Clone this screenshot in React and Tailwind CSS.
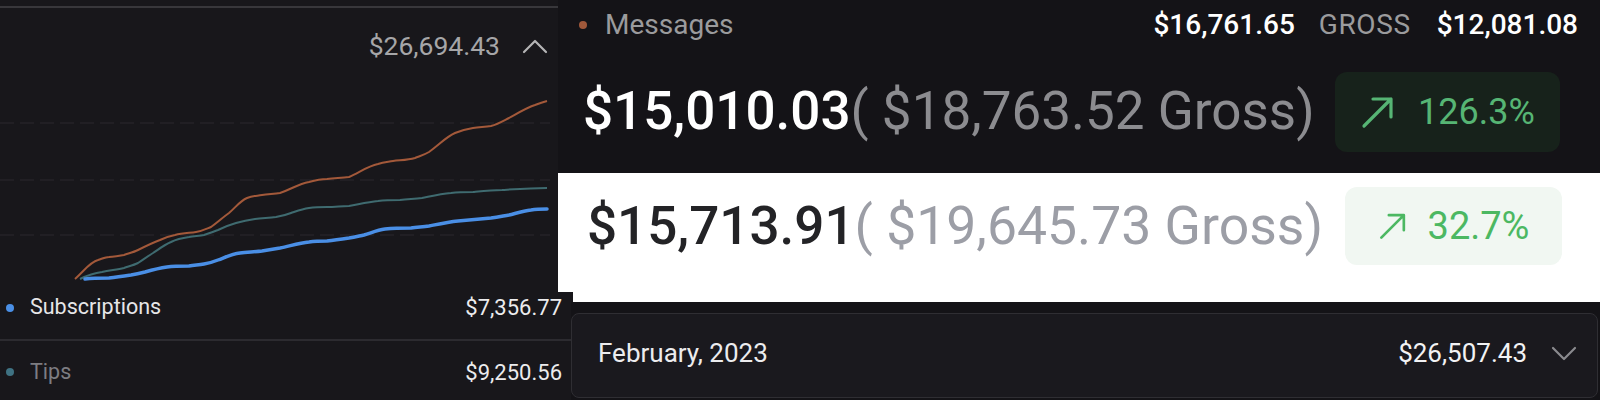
const orange = "M75 279 C85 270 90 262 98 260 C104 258 106 257 109 257 C116 256 120 256 124 255 C130 253 134 252 138 250 C146 246 152 243 160 240 C166 237 170 236 175 235 C183 233 190 233 196 232 C202 231 206 229 211 227 C218 222 222 218 229 213 C236 207 240 201 247 198 C252 196 256 196 262 195 C268 194 274 194 280 193 C292 189 298 184 309 182 C316 180 320 179 327 179 C336 178 342 178 349 177 C360 172 368 166 378 164 C384 162 388 162 393 161 C402 160 408 160 415 158 C420 156 424 155 429 152 C440 144 446 137 455 133 C462 130 466 129 473 128 C480 127 485 127 491 126 C498 124 503 121 509 118 C518 113 526 108 535 105 C540 103 543 102 547 101";
const teal = "M80 279 C88 275 94 273 102 272 C110 270 117 270 124 268 C130 266 134 265 138 263 C144 259 148 256 153 253 C159 249 164 245 171 242 C177 239 182 238 189 237 C195 236 200 236 204 235 C210 233 213 232 218 230 C224 227 229 225 236 223 C243 221 248 220 255 219 C262 218 269 218 276 217 C282 216 286 215 291 213 C297 211 302 209 309 208 C316 207 320 207 327 207 C335 207 342 206 349 206 C360 204 368 202 378 201 C386 200 392 200 400 200 C408 199 414 199 422 198 C432 196 440 194 451 193 C459 192 465 192 473 192 C483 191 492 190 502 190 C518 189 532 188 547 188";
const blue = "M85 279 C93 278 100 278 109 278 C117 277 124 276 131 275 C137 274 141 273 145 272 C152 270 160 268 167 267 C174 266 181 266 189 266 C195 265 199 265 204 264 C210 263 213 262 218 260 C226 257 232 254 240 253 C247 252 254 252 262 251 C268 250 274 249 280 248 C290 246 299 243 309 242 C316 241 320 241 327 241 C335 240 342 239 349 238 C355 237 359 236 364 235 C371 233 377 230 385 229 C395 228 402 228 411 228 C418 227 423 227 429 226 C439 224 448 222 458 221 C469 220 480 219 491 218 C498 217 503 216 509 215 C517 213 523 211 531 210 C537 209 542 209 547 209";

function Chevron({ up, className }) {
  return (
    <svg width="26" height="16" viewBox="0 0 26 16" className={className} fill="none">
      <polyline
        points={up ? "2,14 13,3 24,14" : "2,2 13,13 24,2"}
        stroke="currentColor"
        strokeWidth="2.2"
        strokeLinecap="round"
        strokeLinejoin="round"
      />
    </svg>
  );
}

function Arrow({ size }) {
  return (
    <svg width={size} height={size} viewBox="0 0 36 36" fill="none">
      <path d="M4 32 L31 5 M13 5 H31 V23" stroke="currentColor" strokeWidth="3.2" strokeLinecap="round" strokeLinejoin="round" />
    </svg>
  );
}

export default function App() {
  return (
    <div className="w-[1600px] h-[400px] overflow-hidden bg-[#17161a] font-['Roboto',sans-serif] flex flex-col">
      {/* upper band */}
      <div className="flex h-[292px]">
        {/* chart card */}
        <div className="w-[558px] flex flex-col pt-[6px] bg-[#18171b]">
          <div className="h-[2px] bg-[#38373b]" />
          <div className="h-[24px] mt-[26px] flex items-center justify-end pr-[10px]">
            <span className="text-[26.5px] text-[#a6a6a8] leading-none">$26,694.43</span>
            <Chevron up className="ml-[22px] text-[#b4b4b6]" />
          </div>
          <svg width="558" height="234" viewBox="0 58 558 234" className="block">
            {[123, 180, 235].map((y) => (
              <line key={y} x1="0" x2="550" y1={y} y2={y} stroke="#242328" strokeWidth="1.5" strokeDasharray="14 6" />
            ))}
            <path d={orange} fill="none" stroke="#a3593a" strokeWidth="2" />
            <path d={teal} fill="none" stroke="#3f6b70" strokeWidth="2" />
            <path d={blue} fill="none" stroke="#4a8fe6" strokeWidth="3.5" strokeLinecap="round" />
          </svg>
        </div>

        {/* right stack */}
        <div className="flex-1 flex flex-col">
          <div className="h-[173px] bg-[#141317] flex flex-col">
            <div className="h-[50px] flex items-center pl-[21px] pr-[22px]">
              <span className="w-[8px] h-[8px] rounded-full bg-[#a0583a]" />
              <span className="ml-[18px] text-[28px] text-[#9b9b9d]">Messages</span>
              <span className="ml-auto text-[28px] font-medium text-white">$16,761.65</span>
              <span className="ml-[24px] text-[28px] tracking-[0.6px] text-[#9b9b9d]">GROSS</span>
              <span className="ml-[26px] text-[28px] font-medium text-white">$12,081.08</span>
            </div>
            <div className="flex-1 flex items-center pl-[25px] pr-[40px]">
              <span className="text-[53px] font-medium text-white leading-none">$15,010.03</span>
              <span className="text-[53px] text-[#8c8c90] leading-none">( $18,763.52 Gross)</span>
              <div className="ml-auto w-[225px] h-[80px] rounded-xl bg-[#17221b] flex items-center justify-center gap-[22px] text-[#56b574]">
                <Arrow size={36} />
                <span className="text-[36px] leading-none">126.3%</span>
              </div>
            </div>
          </div>
          <div className="flex-1 bg-white flex items-center pl-[29px] pr-[38px] pb-[13px]">
            <span className="text-[53px] font-medium text-[#232326] leading-none">$15,713.91</span>
            <span className="text-[53.5px] text-[#9c9ea6] leading-none">( $19,645.73 Gross)</span>
            <div className="ml-auto w-[217px] h-[78px] rounded-xl bg-[#f1f7f2] flex items-center justify-center gap-[20px] text-[#4cb862]">
              <Arrow size={30} />
              <span className="text-[38px] leading-none">32.7%</span>
            </div>
          </div>
        </div>
      </div>

      {/* lower band */}
      <div className="flex flex-1">
        <div className="w-[571px] flex flex-col bg-[#18171b]">
          <div className="h-[31px] flex items-center pl-[6px] pr-[9px]">
            <span className="w-[8px] h-[8px] rounded-full bg-[#4a8fe6]" />
            <span className="ml-[16px] text-[21.5px] text-[#e6e6e8]">Subscriptions</span>
            <span className="ml-auto text-[22px] text-[#ececee]">$7,356.77</span>
          </div>
          <div className="h-[16px]" />
          <div className="h-[2px] bg-[#2c2b30]" />
          <div className="h-[62px] flex items-center pl-[6px] pr-[9px]">
            <span className="w-[8px] h-[8px] rounded-full bg-[#3f7283]" />
            <span className="ml-[16px] text-[21.5px] text-[#7d7d82]">Tips</span>
            <span className="ml-auto text-[22px] text-[#ececee]">$9,250.56</span>
          </div>
        </div>
        <div className="flex-1 flex flex-col">
          <div className="h-[10px] ml-[2px] bg-white" />
          <div className="flex-1 pt-[11px] pr-[2px] bg-[#141317]">
            <div className="h-[85px] rounded-lg border border-[#2f2e33] bg-[#1a191e] flex items-center pl-[26px] pr-[20px] pb-[4px]">
              <span className="text-[26px] text-[#ececee]">February, 2023</span>
              <span className="ml-auto text-[26px] text-[#f2f2f4]">$26,507.43</span>
              <Chevron className="ml-[24px] text-[#8a8a8e]" />
            </div>
          </div>
        </div>
      </div>
    </div>
  );
}
